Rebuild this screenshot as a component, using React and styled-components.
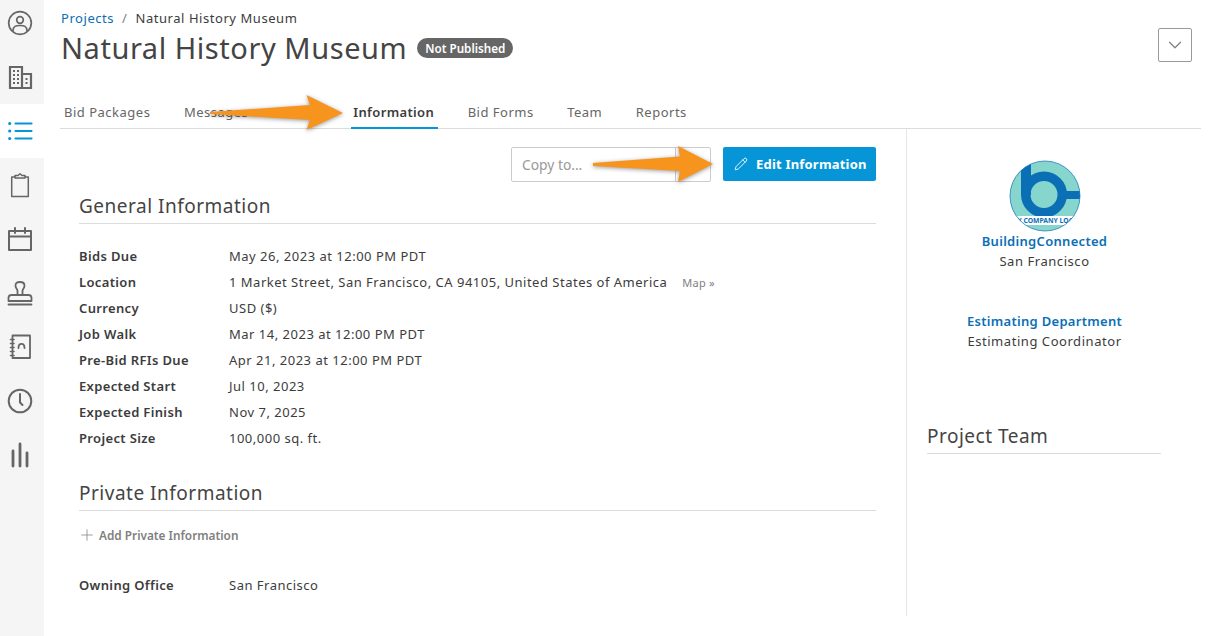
import styled, { createGlobalStyle } from "styled-components";
import { Pencil, Plus, ChevronDown } from "lucide-react";

const GlobalStyle = createGlobalStyle`
  html, body {
    margin: 0;
    padding: 0;
    background: #FFFFFF;
  }

  body {
    font-family: "Noto Sans", "Open Sans", sans-serif;
    color: #3C3C3C;
  }
`;

const Page = styled.div`
  position: relative;
  width: 1213px;
  height: 636px;
  overflow: hidden;
  display: flex;
`;

const Sidebar = styled.nav`
  width: 44px;
  height: 640px;
  margin-top: -4px;
  flex-shrink: 0;
  background: #F5F5F5;
  display: flex;
  flex-direction: column;
`;

const SideItem = styled.div`
  height: 54px;
  padding-right: 4px;
  display: flex;
  align-items: center;
  justify-content: center;
  background: ${props => (props.$active ? "#FFFFFF" : "transparent")};
`;

const Main = styled.main`
  width: 1141px;
  margin-left: 16px;
  display: flex;
  flex-direction: column;
`;

const Header = styled.header`
  height: 97px;
  padding-left: 1px;
  position: relative;
`;

const Breadcrumb = styled.div`
  padding-top: 10px;
  display: flex;
  font-size: 13px;
  line-height: 17px;
  letter-spacing: 0.55px;
  color: #3C3C3C;
`;

const CrumbLink = styled.span`
  color: #0A6FB5;
`;

const CrumbSlash = styled.span`
  margin: 0 8px;
  color: #808080;
`;

const TitleRow = styled.div`
  margin-top: 1px;
  display: flex;
  align-items: center;
  gap: 10px;
`;

const Title = styled.h1`
  margin: 0;
  font-size: 29px;
  line-height: 40px;
  font-weight: 400;
  letter-spacing: 0.55px;
  color: #444444;
`;

const Badge = styled.span`
  padding: 0 8px;
  height: 20px;
  display: flex;
  align-items: center;
  background: #666666;
  border-radius: 10px;
  color: #FFFFFF;
  font-size: 11.7px;
  font-weight: 600;
`;

const MenuButton = styled.div`
  position: absolute;
  top: 28px;
  right: 9px;
  width: 32px;
  height: 32px;
  display: flex;
  align-items: center;
  justify-content: center;
  border: 1px solid #999999;
  border-radius: 2px;
  color: #808080;
`;

const Tabs = styled.div`
  height: 31px;
  padding-left: 4px;
  display: flex;
  gap: 33.5px;
  border-bottom: 1px solid #DCDCDC;
`;

const Tab = styled.div`
  height: 31px;
  padding: 7px 0 0;
  margin-left: ${props => (props.$active ? 71.5 : 0)}px;
  box-sizing: border-box;
  font-size: 13px;
  line-height: 17px;
  font-weight: ${props => (props.$active ? 600 : 400)};
  letter-spacing: ${props => (props.$active ? 0.35 : 0.5)}px;
  color: ${props => (props.$active ? "#3C3C3C" : "#666666")};
  position: relative;

  ${props => props.$active && `
    &::after {
      content: "";
      position: absolute;
      left: -2px;
      right: -4px;
      bottom: -1px;
      height: 2px;
      background: #0696D7;
    }
  `}
`;

const Body = styled.div`
  display: flex;
`;

const Content = styled.section`
  width: 847px;
  height: 487px;
  box-sizing: border-box;
  padding: 18px 30px 0 19px;
  border-right: 1px solid #E6E6E6;
`;

const Actions = styled.div`
  display: flex;
  justify-content: flex-end;
  gap: 12px;
`;

const CopySelect = styled.div`
  width: 200px;
  height: 35px;
  box-sizing: border-box;
  padding-left: 10px;
  display: flex;
  align-items: center;
  border: 1px solid #CCCCCC;
  border-radius: 2px;
  font-size: 13.8px;
  color: #999999;
  position: relative;

  &::after {
    content: "";
    position: absolute;
    top: 0;
    bottom: 0;
    right: 34px;
    width: 1px;
    background: #CCCCCC;
  }
`;

const EditButton = styled.div`
  width: 153px;
  height: 34px;
  box-sizing: border-box;
  padding-left: 11px;
  display: flex;
  align-items: center;
  gap: 8px;
  background: #0696D7;
  border-radius: 2px;
  color: #FFFFFF;
  font-size: 13px;
  font-weight: 700;
  letter-spacing: 0.2px;
`;

const SectionTitle = styled.h2`
  margin: ${props => props.$top}px 0 0;
  height: 29px;
  border-bottom: 1px solid #DCDCDC;
  font-size: 19px;
  line-height: 24px;
  font-weight: 400;
  letter-spacing: 0.5px;
  color: #444444;
`;

const InfoList = styled.div`
  margin-top: 19px;
  display: flex;
  flex-direction: column;
`;

const InfoRow = styled.div`
  height: 26px;
  display: flex;
  align-items: center;
  font-size: 13px;
`;

const InfoLabel = styled.div`
  width: 150px;
  flex-shrink: 0;
  font-weight: 600;
  letter-spacing: 0.35px;
  color: #3C3C3C;
`;

const InfoValue = styled.div`
  letter-spacing: 0.5px;
  color: #3C3C3C;
`;

const MapLink = styled.span`
  margin-left: 15px;
  font-size: 11px;
  letter-spacing: 0.2px;
  color: #808080;
`;

const AddPrivate = styled.div`
  margin: 14px 0 0 -1px;
  height: 20px;
  display: flex;
  align-items: center;
  gap: 3px;
  font-size: 11.8px;
  font-weight: 600;
  color: #808080;
`;

const OfficeRow = styled(InfoRow)`
  margin-top: 27px;
`;

const Aside = styled.aside`
  flex: 1;
  padding-top: 31px;
  display: flex;
  flex-direction: column;
`;

const CenterBlock = styled.div`
  width: 275px;
  display: flex;
  flex-direction: column;
  align-items: center;
  font-size: 13px;
  line-height: 20px;
`;

const LogoSvg = styled.svg`
  margin-bottom: -1px;
`;

const OrgName = styled.div`
  font-weight: 600;
  letter-spacing: 0.3px;
  color: #0A6FB5;
`;

const OrgSub = styled.div`
  letter-spacing: 0.55px;
  color: #3C3C3C;
`;

const Department = styled(CenterBlock)`
  margin-top: 40px;
`;

const TeamTitle = styled.h2`
  margin: 73px 0 0 20px;
  width: 234px;
  height: 29px;
  border-bottom: 1px solid #DCDCDC;
  font-size: 19px;
  line-height: 24px;
  font-weight: 400;
  letter-spacing: 0.5px;
  color: #444444;
`;

const ArrowLayer = styled.svg`
  position: absolute;
  top: 0;
  left: 0;
  pointer-events: none;
  filter: drop-shadow(0 1px 2px rgba(0, 0, 0, 0.4));
`;

const IconSvg = styled.svg`
  fill: none;
  stroke: ${props => props.$color || "#666666"};
  stroke-width: 2;
  stroke-linecap: round;
  stroke-linejoin: round;
`;

const Icon = ({ children, color }) => (
  <IconSvg $color={color} width="26" height="26" viewBox="0 0 26 26">{children}</IconSvg>
);

const fields = [
  ["Bids Due", "May 26, 2023 at 12:00 PM PDT"],
  ["Location", "1 Market Street, San Francisco, CA 94105, United States of America", true],
  ["Currency", "USD ($)"],
  ["Job Walk", "Mar 14, 2023 at 12:00 PM PDT"],
  ["Pre-Bid RFIs Due", "Apr 21, 2023 at 12:00 PM PDT"],
  ["Expected Start", "Jul 10, 2023"],
  ["Expected Finish", "Nov 7, 2025"],
  ["Project Size", "100,000 sq. ft."],
];

const tabs = ["Bid Packages", "Messages", "Information", "Bid Forms", "Team", "Reports"];

const Logo = () => (
  <LogoSvg width="72" height="72" viewBox="0 0 72 72">
    <defs>
      <clipPath id="logoClip">
        <circle cx="36" cy="36" r="35" />
      </clipPath>
    </defs>
    <g clipPath="url(#logoClip)">
      <rect width="72" height="72" fill="#86D6CD" />
      <rect x="12" y="0" width="10" height="35" fill="#0A6FB5" />
      <circle cx="35" cy="34.5" r="18.25" fill="none" stroke="#0A6FB5" strokeWidth="9.5" />
      <rect x="50" y="31" width="22" height="8" fill="#0A6FB5" />
      <rect y="56" width="72" height="9" fill="#FFFFFF" />
      <text x="36" y="63" textAnchor="middle" fontSize="6.8" fontWeight="700" fill="#0A6FB5" fontFamily="Noto Sans">MY COMPANY LOGO</text>
    </g>
    <circle cx="36" cy="36" r="35" fill="none" stroke="#0A6FB5" strokeWidth="0.7" />
  </LogoSvg>
);

const App = () => (
  <Page>
    <GlobalStyle />
    <Sidebar>
      <SideItem>
        <Icon>
          <circle cx="13" cy="13" r="11.3" strokeWidth="1.7" />
          <circle cx="13" cy="10" r="3.3" strokeWidth="1.7" />
          <path d="M6 21 C6 16 9 15.5 13 15.5 C17 15.5 20 16 20 21" strokeWidth="1.7" />
        </Icon>
      </SideItem>
      <SideItem>
        <Icon>
          <path d="M3 24 V3 H15 V24 Z M15 10 H24 V24 H15 Z" strokeWidth="2.2" strokeLinecap="square" strokeLinejoin="miter" />
          <path d="M6 7 H8 M10 7 H12 M6 11 H8 M10 11 H12 M6 15 H8 M10 15 H12 M6 19 H8 M10 19 H12 M18.5 15 H20.5 M18.5 19 H20.5" strokeWidth="2" strokeLinecap="butt" />
        </Icon>
      </SideItem>
      <SideItem $active>
        <Icon color="#0696D7">
          <path d="M8.5 5.5 H24.5 M8.5 13 H24.5 M8.5 20.5 H24.5" strokeWidth="2.2" />
          <path d="M2.6 5.5 H2.8 M2.6 13 H2.8 M2.6 20.5 H2.8" strokeWidth="3" />
        </Icon>
      </SideItem>
      <SideItem>
        <Icon>
          <path d="M8 5 H4.7 V24.5 H21.3 V5 H18" strokeWidth="1.5" />
          <path d="M8 6 V3.5 H11 L13 1.7 L15 3.5 H18 V6 Z" strokeWidth="1.5" />
        </Icon>
      </SideItem>
      <SideItem>
        <Icon>
          <path d="M2 5 H24 V24 H2 Z M2 10.5 H24 M8 2 V7 M18 2 V7" />
        </Icon>
      </SideItem>
      <SideItem>
        <Icon>
          <path d="M10.5 15 V11 C10.5 9 8.5 8.5 8.5 5.5 C8.5 3 10 2 13 2 C16 2 17.5 3 17.5 5.5 C17.5 8.5 15.5 9 15.5 11 V15" strokeWidth="1.8" />
          <path d="M1.5 21 V18 C1.5 16 2.5 15 4.5 15 H21.5 C23.5 15 24.5 16 24.5 18 V21 Z M1.5 24.5 H24.5" strokeWidth="1.8" />
        </Icon>
      </SideItem>
      <SideItem>
        <Icon>
          <path d="M5.5 1.5 H23 V24 H5.5 Z" strokeWidth="1.8" />
          <path d="M3.5 5.5 H7 M3.5 9.5 H7 M3.5 13.5 H7 M3.5 17.5 H7 M3.5 21.5 H7" strokeWidth="1.6" />
          <path d="M11.5 14 C11.5 8.5 17.5 8.5 17.5 14" strokeWidth="1.8" />
        </Icon>
      </SideItem>
      <SideItem>
        <Icon>
          <circle cx="13" cy="13" r="11.3" />
          <path d="M13 6 V14.5 L15.5 17" />
        </Icon>
      </SideItem>
      <SideItem>
        <Icon>
          <path d="M6 9 V24 M13 2 V24 M20 11 V24" strokeWidth="2.8" />
        </Icon>
      </SideItem>
    </Sidebar>

    <Main>
      <Header>
        <Breadcrumb>
          <CrumbLink>Projects</CrumbLink>
          <CrumbSlash>/</CrumbSlash>
          Natural History Museum
        </Breadcrumb>
        <TitleRow>
          <Title>Natural History Museum</Title>
          <Badge>Not Published</Badge>
        </TitleRow>
        <MenuButton>
          <ChevronDown size={22} strokeWidth={1.3} />
        </MenuButton>
      </Header>

      <Tabs>
        {tabs.map(tab => (
          <Tab key={tab} $active={tab === "Information"}>{tab}</Tab>
        ))}
      </Tabs>

      <Body>
        <Content>
          <Actions>
            <CopySelect>Copy to...</CopySelect>
            <EditButton>
              <Pencil size={14} strokeWidth={1.5} />
              Edit Information
            </EditButton>
          </Actions>

          <SectionTitle $top={12}>General Information</SectionTitle>
          <InfoList>
            {fields.map(([label, value, hasMap]) => (
              <InfoRow key={label}>
                <InfoLabel>{label}</InfoLabel>
                <InfoValue>{value}</InfoValue>
                {hasMap && <MapLink>Map »</MapLink>}
              </InfoRow>
            ))}
          </InfoList>

          <SectionTitle $top={30}>Private Information</SectionTitle>
          <AddPrivate>
            <Plus size={18} strokeWidth={1} />
            Add Private Information
          </AddPrivate>
          <OfficeRow>
            <InfoLabel>Owning Office</InfoLabel>
            <InfoValue>San Francisco</InfoValue>
          </OfficeRow>
        </Content>

        <Aside>
          <CenterBlock>
            <Logo />
            <OrgName>BuildingConnected</OrgName>
            <OrgSub>San Francisco</OrgSub>
          </CenterBlock>
          <Department>
            <OrgName>Estimating Department</OrgName>
            <OrgSub>Estimating Coordinator</OrgSub>
          </Department>
          <TeamTitle>Project Team</TeamTitle>
        </Aside>
      </Body>
    </Main>

    <ArrowLayer width="1213" height="636" viewBox="0 0 1213 636">
      <path d="M210 112 L310 105 L306.5 95 L343 113 L306.5 130 L310 120 L210 114 Z" fill="#F7941E" />
      <path d="M593 163 L680 156.5 L678 146 L713 164 L678 182 L680 171 L593 166 Z" fill="#F7941E" />
    </ArrowLayer>
  </Page>
);

export default App;
